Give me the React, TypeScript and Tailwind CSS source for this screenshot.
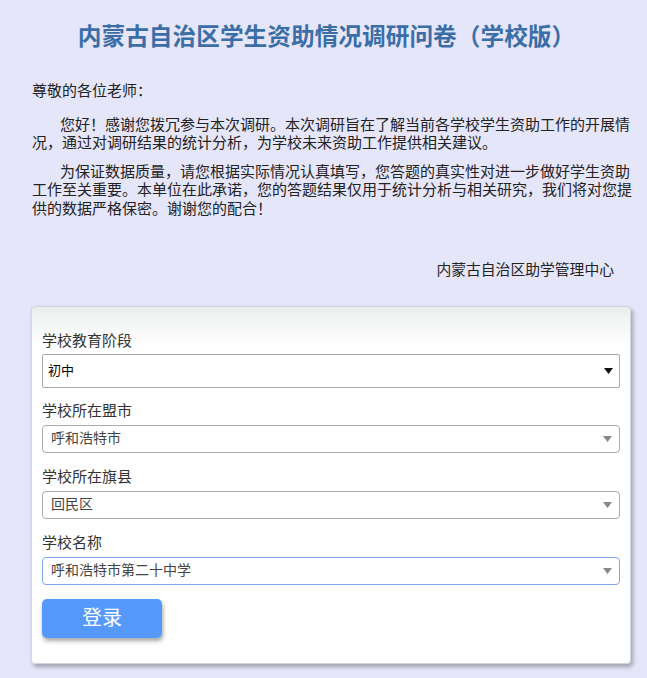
const cjk = "font-['Liberation_Sans','Noto_Sans_CJK_SC',sans-serif]";

const Caret = ({ dark }: { dark?: boolean }) => (
  <svg width="9" height="6" viewBox="0 0 9 6" className="shrink-0">
    <path d="M0 0 L9 0 L4.5 6 Z" fill={dark ? "#111" : "#888"} />
  </svg>
);

const Field = ({
  label,
  value,
  focused,
}: {
  label: string;
  value: string;
  focused?: boolean;
}) => (
  <div className="mt-[14px]">
    <div className="text-[15px] leading-[20px] text-[#333]">{label}</div>
    <div
      className={`mt-[4px] flex h-[28px] items-center justify-between rounded-[4px] border bg-white pl-[8px] pr-[7px] ${
        focused ? "border-[#7fa7ee]" : "border-[#aaa]"
      }`}
    >
      <span className="text-[14px] text-[#444]">{value}</span>
      <Caret />
    </div>
  </div>
);

export default function App() {
  return (
    <div className={`min-h-[678px] bg-[#e6e6fa] ${cjk}`}>
      <h1 className="pt-[22px] pl-[6px] text-center text-[23.7px] leading-[30px] font-bold text-[#3b6ea7]">
        内蒙古自治区学生资助情况调研问卷（学校版）
      </h1>

      <div className="ml-[32px] w-[605px] text-[15px] leading-[18.5px] text-[#222]">
        <p className="mt-[30px]">尊敬的各位老师：</p>
        <p className="mt-[15px] indent-[28px]">
          您好！感谢您拨冗参与本次调研。本次调研旨在了解当前各学校学生资助工作的开展情况，通过对调研结果的统计分析，为学校未来资助工作提供相关建议。
        </p>
        <p className="mt-[10px] indent-[28px]">
          为保证数据质量，请您根据实际情况认真填写，您答题的真实性对进一步做好学生资助工作至关重要。本单位在此承诺，您的答题结果仅用于统计分析与相关研究，我们将对您提供的数据严格保密。谢谢您的配合！
        </p>
        <p className="mt-[43px] pr-[23px] text-right text-[14.8px]">
          内蒙古自治区助学管理中心
        </p>
      </div>

      <div className="mt-[26px] ml-[31px] w-[600px] rounded-[4px] border border-[#d4d4dc] bg-[linear-gradient(to_bottom,#eceeee_0px,#ffffff_40px)] px-[10px] pt-[10px] pb-[25px] shadow-[2px_3px_4px_rgba(0,0,0,0.3)]">
        <div className="mt-[14px]">
          <div className="text-[15px] leading-[20px] text-[#333]">学校教育阶段</div>
          <div className="mt-[3px] flex h-[34px] items-center justify-between rounded-[2px] border border-[#a9a9a9] bg-white pl-[5px] pr-[6px]">
            <span className="text-[13px] text-black">初中</span>
            <Caret dark />
          </div>
        </div>
        <div className="mt-[-1px]">
          <Field label="学校所在盟市" value="呼和浩特市" />
        </div>
        <Field label="学校所在旗县" value="回民区" />
        <Field label="学校名称" value="呼和浩特市第二十中学" focused />
        <button className="mt-[14px] flex h-[39px] w-[120px] items-center justify-center rounded-[5px] bg-[#5599fd] text-[20px] text-white shadow-[1px_3px_4px_rgba(0,0,0,0.35)]">
          登录
        </button>
      </div>
    </div>
  );
}
